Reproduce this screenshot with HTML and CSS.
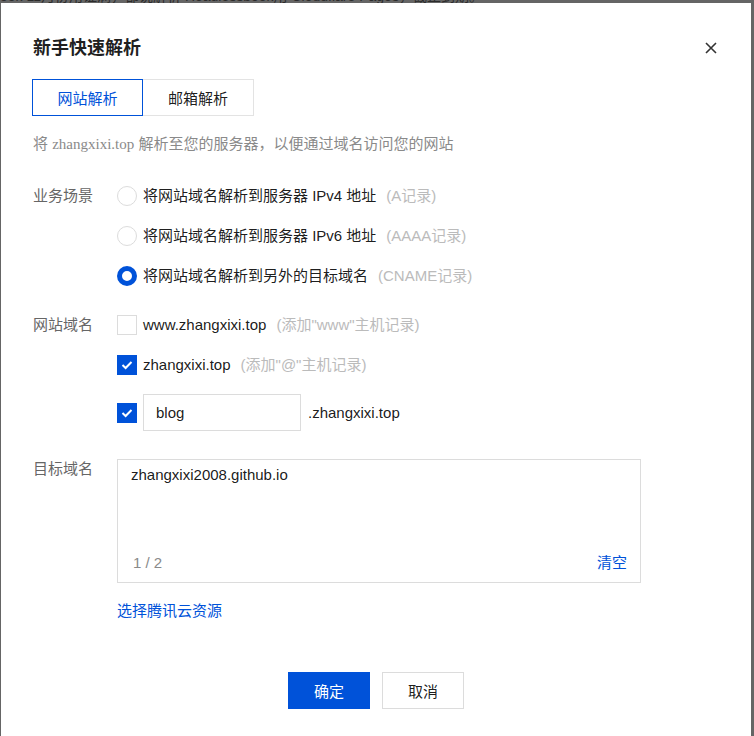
FILE: index.html
```html
<!DOCTYPE html>
<html lang="zh">

<head>
    <meta charset="UTF-8">
    <meta name="viewport" content="width=device-width, initial-scale=1.0">
    <title>新手快速解析</title>
    <link rel="stylesheet" href="styles.css">
</head>

<body>
    <div class="peek">
        <p>ook 11月份用证满，都说解析 Headlessbook用 Cloudflare Pages，截止到期。</p>
    </div>
    <div class="dialog">
        <div class="dialog-header">
            <span class="dialog-title">新手快速解析</span>
            <span class="dialog-close">
                <svg width="12" height="12" viewBox="0 0 12 12">
                    <path d="M1 1L11 11M11 1L1 11" stroke="#333" stroke-width="1.6" fill="none" />
                </svg>
            </span>
        </div>

        <div class="tabs">
            <div class="tab active">网站解析</div>
            <div class="tab">邮箱解析</div>
        </div>

        <p class="dialog-desc">将 <span class="domain-serif">zhangxixi.top</span> 解析至您的服务器，以便通过域名访问您的网站</p>

        <div class="form-item scene">
            <div class="form-label">业务场景</div>
            <div class="form-control options">
                <label class="option"><span class="radio"></span>将网站域名解析到服务器 IPv4 地址<span class="hint">(A记录)</span></label>
                <label class="option"><span class="radio"></span>将网站域名解析到服务器 IPv6 地址<span class="hint">(AAAA记录)</span></label>
                <label class="option"><span class="radio checked"></span>将网站域名解析到另外的目标域名<span class="hint">(CNAME记录)</span></label>
            </div>
        </div>

        <div class="form-item hosts">
            <div class="form-label">网站域名</div>
            <div class="form-control options">
                <label class="option"><span class="checkbox"></span>www.zhangxixi.top<span class="hint">(添加"www"主机记录)</span></label>
                <label class="option"><span class="checkbox checked">
                        <svg width="12" height="10" viewBox="0 0 12 10">
                            <path d="M1.5 5L4.6 8L10.5 2" stroke="#fff" stroke-width="2" fill="none" />
                        </svg>
                    </span>zhangxixi.top<span class="hint">(添加"@"主机记录)</span></label>
                <div class="option custom">
                    <span class="checkbox checked">
                        <svg width="12" height="10" viewBox="0 0 12 10">
                            <path d="M1.5 5L4.6 8L10.5 2" stroke="#fff" stroke-width="2" fill="none" />
                        </svg>
                    </span>
                    <input class="text-input" type="text" value="blog">
                    <span class="suffix">.zhangxixi.top</span>
                </div>
            </div>
        </div>

        <div class="form-item target">
            <div class="form-label">目标域名</div>
            <div class="form-control">
                <div class="textarea">
                    <div class="textarea-value">zhangxixi2008.github.io</div>
                    <div class="textarea-footer">
                        <span class="count">1 / 2</span>
                        <a class="link">清空</a>
                    </div>
                </div>
                <a class="link resource">选择腾讯云资源</a>
            </div>
        </div>

        <div class="dialog-footer">
            <button class="btn btn-primary">确定</button>
            <button class="btn">取消</button>
        </div>
    </div>
</body>

</html>
```

FILE: styles.css
```css
* {
    box-sizing: border-box;
}

body {
    margin: 0;
    height: 736px;
    overflow: hidden;
    background-color: #656565;
    font-family: "Liberation Sans", "Noto Sans CJK SC", sans-serif;
    font-size: 15px;
    color: rgba(0, 0, 0, 0.9);
}

p {
    margin: 0;
}

a {
    text-decoration: none;
    cursor: pointer;
}

/* page text under the mask, only its lower edge shows */
.peek {
    height: 3px;
    overflow: hidden;
}

.peek p {
    margin-top: -11px;
    font-size: 14px;
    line-height: 14px;
    color: #2b2b2b;
    white-space: nowrap;
}

.dialog {
    margin-left: 1px;
    width: 750px;
    height: 733px;
    padding: 32px 34px 0 31px;
    background-color: #fff;
}

.dialog-header {
    display: flex;
    justify-content: space-between;
    align-items: center;
    height: 26px;
}

.dialog-title {
    font-size: 18px;
    font-weight: bold;
    color: #1f1f1f;
    line-height: 26px;
    padding-left: 1px;
}

.dialog-close {
    display: flex;
    cursor: pointer;
}

.tabs {
    display: flex;
    margin-top: 18px;
}

.tab {
    display: flex;
    align-items: center;
    justify-content: center;
    width: 111px;
    height: 37px;
    border: 1px solid #e3e3e3;
    cursor: pointer;
}

.tab + .tab {
    border-left: none;
}

.tab.active {
    border-color: #0052d9;
    color: #0052d9;
}

.dialog-desc {
    margin-top: 18px;
    line-height: 20px;
    color: #8a8a8a;
    padding-left: 1px;
}

.domain-serif {
    font-family: "Liberation Serif", serif;
}

.form-item {
    display: flex;
}

.form-label {
    width: 85px;
    flex-shrink: 0;
    line-height: 20px;
    color: #666;
    padding-left: 1px;
}

.form-control {
    flex: 1;
}

.options {
    display: flex;
    flex-direction: column;
    gap: 20px;
}

.option {
    display: flex;
    align-items: center;
    height: 20px;
    line-height: 20px;
    white-space: nowrap;
    cursor: pointer;
}

.hint {
    margin-left: 10px;
    color: #bbb;
}

.scene {
    margin-top: 32px;
}

.hosts {
    margin-top: 29px;
}

.target {
    margin-top: 28px;
}

.radio,
.checkbox {
    display: flex;
    align-items: center;
    justify-content: center;
    width: 20px;
    height: 20px;
    margin-right: 6px;
    flex-shrink: 0;
    border: 1px solid #dcdcdc;
    background-color: #fff;
}

.radio {
    border-radius: 50%;
}

.radio.checked {
    border: 5px solid #0052d9;
}

.checkbox.checked {
    border-color: #0052d9;
    background-color: #0052d9;
}

.option.custom {
    height: 37px;
    margin-top: -1px;
}

.text-input {
    width: 158px;
    height: 37px;
    margin-left: 0;
    padding: 0 12px;
    border: 1px solid #dcdcdc;
    outline: none;
    font-family: inherit;
    font-size: 15px;
    color: rgba(0, 0, 0, 0.9);
}

.suffix {
    margin-left: 7px;
}

.textarea {
    display: flex;
    flex-direction: column;
    justify-content: space-between;
    width: 524px;
    height: 124px;
    padding: 5px 13px 9px 13px;
    border: 1px solid #dcdcdc;
}

.textarea-value {
    line-height: 20px;
}

.textarea-footer {
    display: flex;
    justify-content: space-between;
    align-items: center;
    line-height: 20px;
    padding-left: 2px;
}

.count {
    color: #8a8a8a;
}

.link {
    color: #0052d9;
}

.resource {
    display: block;
    margin-top: 18px;
    line-height: 20px;
}

.dialog-footer {
    display: flex;
    justify-content: center;
    gap: 12px;
    margin-top: 51px;
    padding-left: 3px;
}

.btn {
    width: 82px;
    height: 37px;
    border: 1px solid #dcdcdc;
    background-color: #fff;
    font-family: inherit;
    font-size: 15px;
    color: rgba(0, 0, 0, 0.9);
    cursor: pointer;
}

.btn-primary {
    border-color: #0052d9;
    background-color: #0052d9;
    color: #fff;
}
```
